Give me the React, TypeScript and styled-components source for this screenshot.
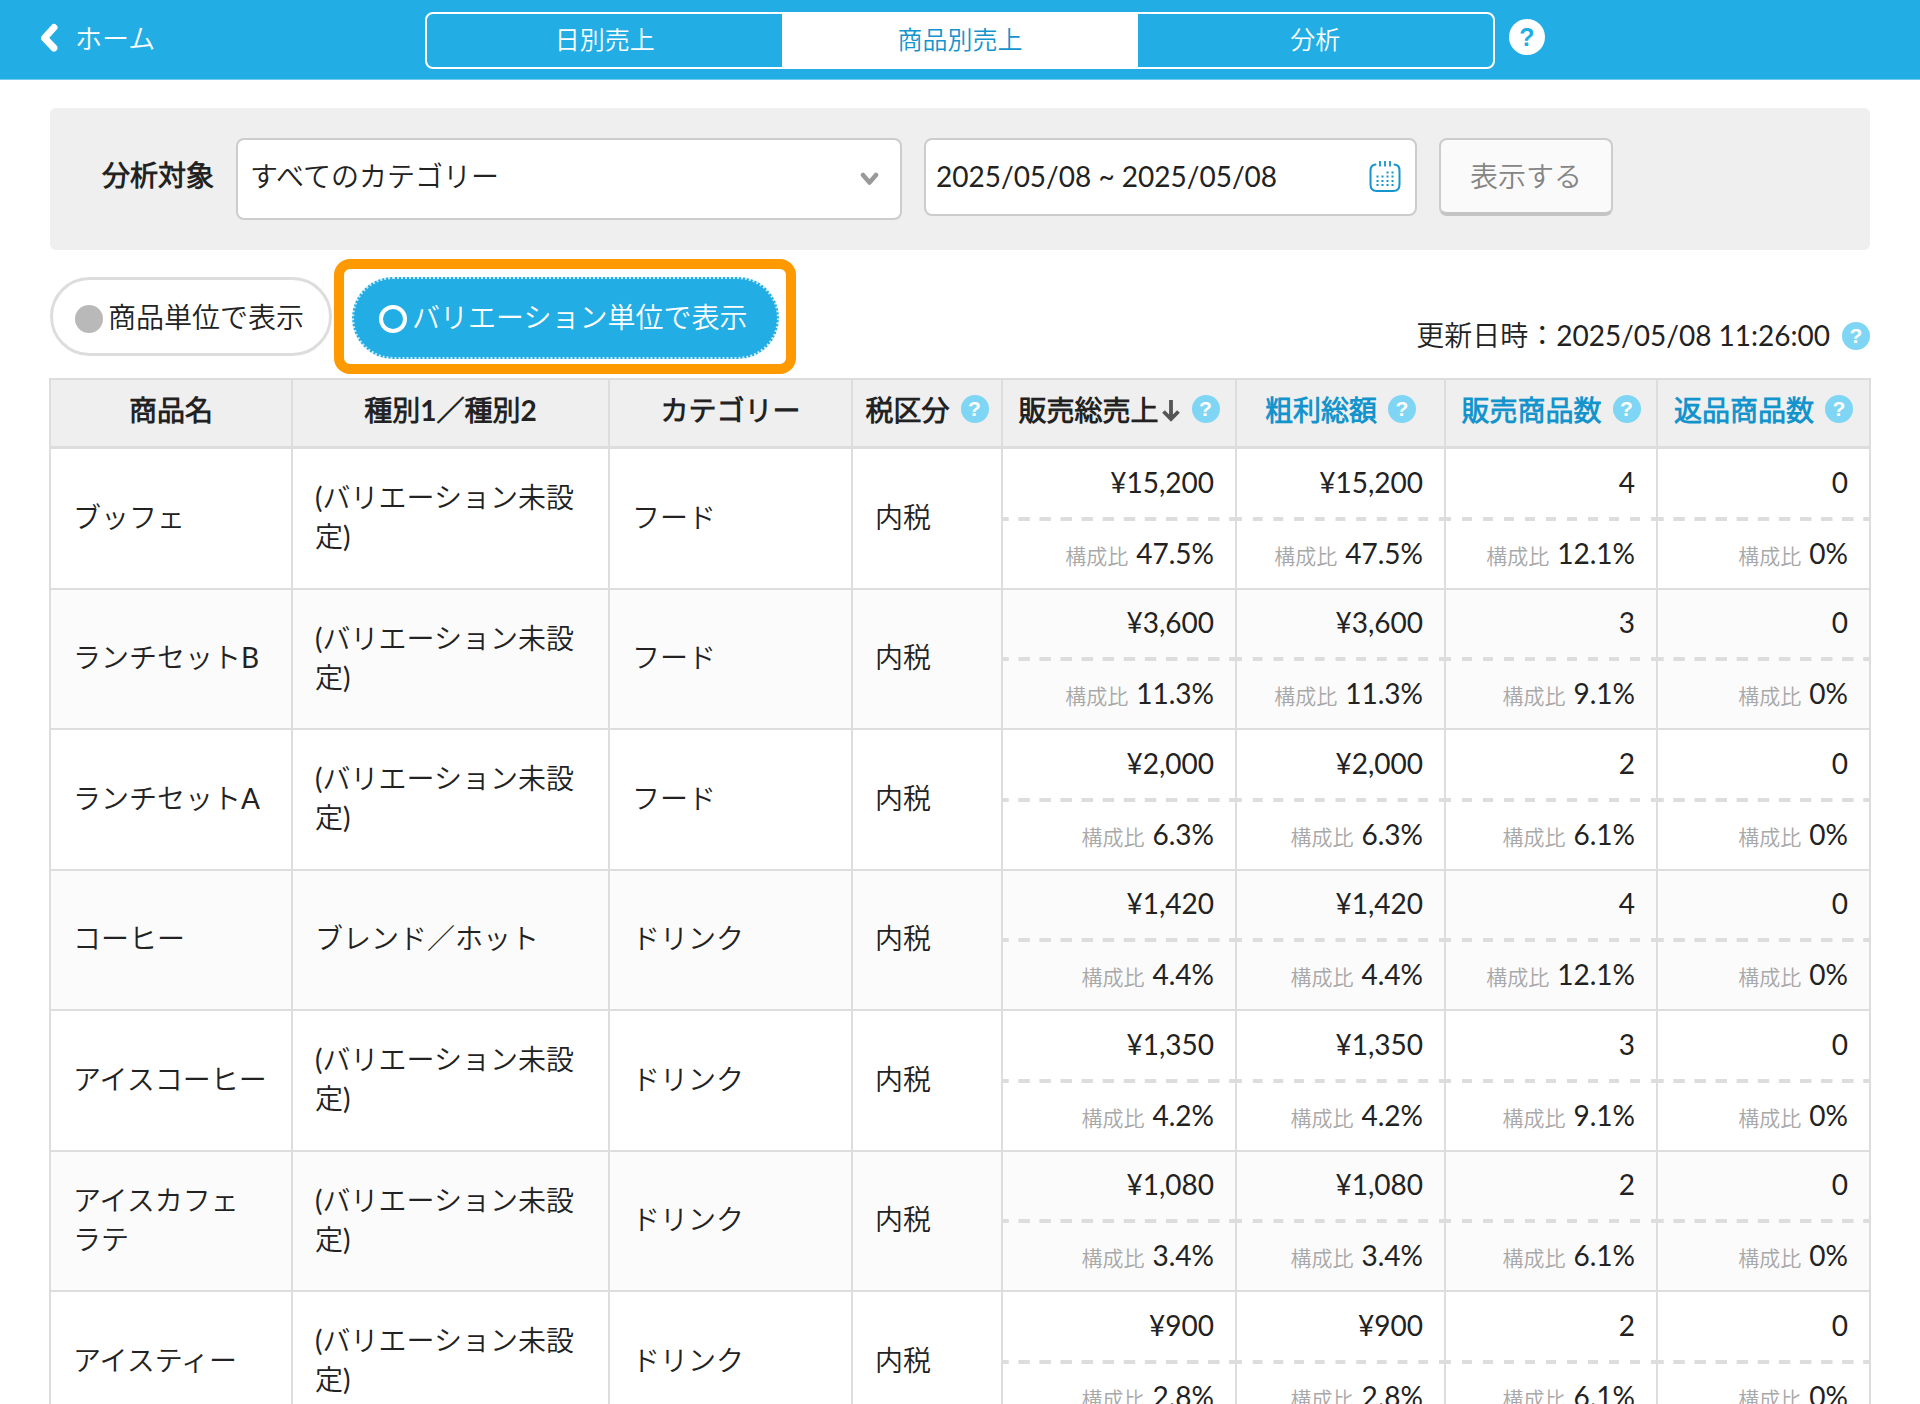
import React from "react";
import styled, { createGlobalStyle, css } from "styled-components";

const color = {
  brand: "#22ade5",
  link: "#1394cc",
  help: "#7fd5f4",
  text: "#222222",
  muted: "#a8a8a8",
  line: "#dddddd",
  field: "#cccccc",
  panel: "#efefef",
  stripe: "#fbfbfb",
  highlight: "#ff9900",
};

const GlobalStyle = createGlobalStyle`
  *, *::before, *::after { box-sizing: border-box; }
  body { margin: 0; background: #fff; }
  body, button, input, select {
    font-family: Lato, "Noto Sans CJK JP DemiLight", "Noto Sans CJK JP Light", "Noto Sans CJK JP", sans-serif;
    font-size: 28px;
    line-height: 39px;
    color: ${color.text};
  }
`;

const Shell = styled.div`
  display: flex;
  flex-direction: column;
  height: 100vh;
`;

const Header = styled.header`
  flex: none;
  display: grid;
  grid-template-columns: 1fr minmax(0, 1070px) 1fr;
  height: 80px;
  padding: 12px 40px 0;
  background: ${color.brand};
  border-bottom: 1px solid #74cdf0;
`;

const HomeLink = styled.a`
  justify-self: start;
  display: flex;
  align-items: center;
  gap: 15px;
  height: 52px;
  color: #fff;
  font-size: 27px;
  text-decoration: none;
`;

const Tabs = styled.nav`
  display: grid;
  grid-template-columns: repeat(3, 1fr);
  height: 57px;
  border: 2px solid #fff;
  border-radius: 8px;
  overflow: hidden;
`;

const Tab = styled.button<{ $active?: boolean }>`
  padding: 0 0 2px;
  border: 0;
  font-size: 25px;
  background: ${(p) => (p.$active ? "#fff" : "transparent")};
  color: ${(p) => (p.$active ? color.link : "#fff")};
`;

const HelpButton = styled.button<{ $large?: boolean }>`
  flex: none;
  display: grid;
  place-items: center;
  width: ${(p) => (p.$large ? 36 : 28)}px;
  height: ${(p) => (p.$large ? 36 : 28)}px;
  padding: 0;
  border: 0;
  border-radius: 50%;
  font-family: "Liberation Sans", sans-serif;
  font-size: ${(p) => (p.$large ? 25 : 21)}px;
  font-weight: 700;
  line-height: 1;
  background: ${(p) => (p.$large ? "#fff" : color.help)};
  color: ${(p) => (p.$large ? color.brand : "#fff")};
`;

const HeaderSide = styled.div`
  padding: 7px 14px;
`;

const Main = styled.main`
  flex: 1;
  min-height: 0;
  padding: 28px 50px 0;
  overflow-y: auto;
  scrollbar-width: none;
`;

const FilterPanel = styled.form`
  display: flex;
  align-items: flex-start;
  padding: 30px 52px;
  background: ${color.panel};
  border-radius: 6px;
`;

const FilterLabel = styled.label`
  flex: none;
  margin-right: 22px;
  line-height: 74px;
  font-weight: 700;
`;

const Field = styled.div<{ $basis: number }>`
  display: grid;
  flex: 0 1 ${(p) => p.$basis}px;
  min-width: 0;
  align-items: center;

  > * {
    grid-area: 1 / 1;
  }
  > svg {
    justify-self: end;
    pointer-events: none;
  }
`;

const fieldBox = css`
  width: 100%;
  min-width: 0;
  background: #fff;
  border: 2px solid ${color.field};
  border-radius: 8px;
`;

const CategorySelect = styled.select`
  ${fieldBox}
  height: 82px;
  padding: 0 60px 6px 12px;
  appearance: none;
`;

const DateInput = styled.input`
  ${fieldBox}
  height: 78px;
  padding: 0 60px 2px 10px;
`;

const FieldGap = styled.div`
  flex: none;
  width: 22px;
`;

const SubmitButton = styled.button`
  flex: none;
  width: 174px;
  height: 78px;
  padding: 0;
  background: #fafafa;
  border: 2px solid ${color.field};
  border-bottom: 4px solid #c4c4c4;
  border-radius: 8px;
  color: #858585;
`;

const Toolbar = styled.div`
  display: flex;
  justify-content: space-between;
  align-items: flex-end;
  padding: 9px 0 4px;
`;

const UnitSwitch = styled.div`
  display: flex;
  align-items: center;
  gap: 2px;
`;

const Highlight = styled.div`
  padding: 8px 7px 5px 8px;
  border: 10px solid ${color.highlight};
  border-radius: 16px;
`;

const Pill = styled.label<{ $active?: boolean }>`
  display: flex;
  align-items: center;
  gap: 5px;
  white-space: nowrap;
  border-radius: 41px;
  ${(p) =>
    p.$active
      ? css`
          width: 427px;
          height: 82px;
          padding: 0 25px 1px;
          color: #fff;
          background: ${color.brand};
          border: 2px dotted #c9ecfa;
        `
      : css`
          width: 282px;
          height: 79px;
          padding: 1px 22px 0;
          background: #fff;
          border: 3px solid ${color.line};
        `}
`;

const Radio = styled.input`
  flex: none;
  width: 28px;
  height: 28px;
  margin: 3px 0 0;
  appearance: none;
  border-radius: 50%;
  background: #b9b9b9;

  &:checked {
    background: transparent;
    border: 4px solid #fff;
  }
`;

const Updated = styled.div`
  display: flex;
  align-items: center;
  gap: 12px;
  padding-bottom: 19px;
`;

const Table = styled.table`
  width: calc(100% + 2px);
  margin: 0 -1px;
  table-layout: fixed;
  border-collapse: separate;
  border-spacing: 0;
  border: solid ${color.line};
  border-width: 2px 0 0 2px;
`;

const HeadCell = styled.th`
  height: 69px;
  padding: 0 0 6px;
  background: ${color.panel};
  border: solid ${color.line};
  border-width: 0 2px 3px 0;
  font-weight: 700;
  white-space: nowrap;
`;

const HeadContent = styled.div`
  display: flex;
  justify-content: center;
  align-items: center;
  gap: 11px;

  > ${HelpButton} {
    margin-bottom: 3px;
  }
`;

const SortButton = styled.button<{ $current?: boolean }>`
  display: flex;
  align-items: center;
  gap: 2px;
  padding: 0;
  border: 0;
  background: none;
  font-weight: 700;
  color: ${(p) => (p.$current ? color.text : color.link)};
`;

const Row = styled.tr`
  height: 141px;

  &:nth-child(even) {
    height: 140px;
    background: ${color.stripe};
  }
`;

const Cell = styled.td`
  padding: 0 20px 3px 22px;
  border: solid ${color.line};
  border-width: 0 2px 2px 0;
  white-space: pre-line;
`;

const MetricCell = styled(Cell)`
  padding: 0;
  text-align: right;
`;

const Metric = styled.div`
  height: 67px;
  padding: 0 21px;
  line-height: 65px;
  white-space: nowrap;
`;

const DashedRule = styled.div`
  height: 4px;
  background: linear-gradient(
      90deg,
      ${color.line} 26%,
      transparent 26% 74%,
      ${color.line} 74%
    )
    0 0 / 21px 4px round;
`;

const RatioLabel = styled.span`
  margin-right: 8px;
  font-size: 21px;
  color: ${color.muted};
`;

const BackIcon = () => (
  <svg width="20" height="32" viewBox="0 0 20 32" fill="none" aria-hidden="true">
    <path d="M14 5.500 4.500 16 14 26" stroke="#fff" strokeWidth="7" strokeLinecap="round" strokeLinejoin="round" />
  </svg>
);

const ChevronIcon = () => (
  <svg width="42" height="16" viewBox="0 0 42 16" fill="none" aria-hidden="true">
    <path d="m3 4 6.500 7.500L16 4" stroke="#999" strokeWidth="4.500" strokeLinecap="round" strokeLinejoin="round" />
  </svg>
);

const CalendarIcon = () => (
  <svg width="48" height="32" viewBox="0 0 48 32" fill="none" stroke={color.link} aria-hidden="true">
    <path d="M6.500 3.500C2.500 4 1.500 6 1.500 9.500v14c0 4.500 2 6.500 6.500 6.500h16c4.500 0 6.500-2 6.500-6.500v-14c0-3.500-1-5.500-5-6" strokeWidth="2" strokeLinecap="round" />
    <path d="M11 0v5.500M16 0v5.500M21 0v5.500" strokeWidth="1.800" />
    <path d="M17.500 11.500h8M7.500 15.500h18M7.500 20h18M7.500 24h18" strokeWidth="2" strokeDasharray="2 3" />
  </svg>
);

const SortArrow = () => (
  <svg width="20" height="24" viewBox="0 0 20 24" fill="none" stroke="#555" strokeWidth="3.800" aria-hidden="true">
    <path d="M10 2v18M2.500 13.500l7.500 7.500 7.500-7.500" />
  </svg>
);

const Help = ({ large, about }: { large?: boolean; about: string }) => (
  <HelpButton type="button" $large={large} aria-label={about + "のヘルプ"}>
    ?
  </HelpButton>
);

type Column = { title: string; width: number; help?: boolean; sort?: "current" | "available" };

const columns: Column[] = [
  { title: "商品名", width: 242 },
  { title: "種別1／種別2", width: 317 },
  { title: "カテゴリー", width: 243 },
  { title: "税区分", width: 150, help: true },
  { title: "販売総売上", width: 234, help: true, sort: "current" },
  { title: "粗利総額", width: 209, help: true, sort: "available" },
  { title: "販売商品数", width: 212, help: true, sort: "available" },
  { title: "返品商品数", width: 213, help: true, sort: "available" },
];

const unset = "(バリエーション未設定)";

type Product = {
  name: string;
  variation: string;
  category: string;
  sales: string;
  salesRatio: string;
  count: string;
  countRatio: string;
};

const products: Product[] = [
  { name: "ブッフェ", variation: unset, category: "フード", sales: "¥15,200", salesRatio: "47.5%", count: "4", countRatio: "12.1%" },
  { name: "ランチセットB", variation: unset, category: "フード", sales: "¥3,600", salesRatio: "11.3%", count: "3", countRatio: "9.1%" },
  { name: "ランチセットA", variation: unset, category: "フード", sales: "¥2,000", salesRatio: "6.3%", count: "2", countRatio: "6.1%" },
  { name: "コーヒー", variation: "ブレンド／ホット", category: "ドリンク", sales: "¥1,420", salesRatio: "4.4%", count: "4", countRatio: "12.1%" },
  { name: "アイスコーヒー", variation: unset, category: "ドリンク", sales: "¥1,350", salesRatio: "4.2%", count: "3", countRatio: "9.1%" },
  { name: "アイスカフェ\nラテ", variation: unset, category: "ドリンク", sales: "¥1,080", salesRatio: "3.4%", count: "2", countRatio: "6.1%" },
  { name: "アイスティー", variation: unset, category: "ドリンク", sales: "¥900", salesRatio: "2.8%", count: "2", countRatio: "6.1%" },
];

const MetricPair = ({ value, ratio }: { value: string; ratio: string }) => (
  <MetricCell>
    <Metric>{value}</Metric>
    <DashedRule />
    <Metric>
      <RatioLabel>構成比</RatioLabel>
      {ratio}
    </Metric>
  </MetricCell>
);

export default function App() {
  return (
    <Shell>
      <GlobalStyle />
      <Header>
        <HomeLink href="#home">
          <BackIcon />
          ホーム
        </HomeLink>
        <Tabs>
          <Tab type="button">日別売上</Tab>
          <Tab type="button" $active>
            商品別売上
          </Tab>
          <Tab type="button">分析</Tab>
        </Tabs>
        <HeaderSide>
          <Help large about="商品別売上" />
        </HeaderSide>
      </Header>

      <Main>
        <FilterPanel onSubmit={(e) => e.preventDefault()}>
          <FilterLabel htmlFor="category">分析対象</FilterLabel>
          <Field $basis={666}>
            <CategorySelect id="category">
              <option>すべてのカテゴリー</option>
            </CategorySelect>
            <ChevronIcon />
          </Field>
          <FieldGap />
          <Field $basis={493}>
            <DateInput type="text" aria-label="期間" defaultValue="2025/05/08 ~ 2025/05/08" />
            <CalendarIcon />
          </Field>
          <FieldGap />
          <SubmitButton type="submit">表示する</SubmitButton>
        </FilterPanel>

        <Toolbar>
          <UnitSwitch>
            <Pill>
              <Radio type="radio" name="unit" />
              商品単位で表示
            </Pill>
            <Highlight>
              <Pill $active>
                <Radio type="radio" name="unit" defaultChecked />
                バリエーション単位で表示
              </Pill>
            </Highlight>
          </UnitSwitch>
          <Updated>
            更新日時：2025/05/08 11:26:00
            <Help about="更新日時" />
          </Updated>
        </Toolbar>

        <Table>
          <colgroup>
            {columns.map((c) => (
              <col key={c.title} width={c.width} />
            ))}
          </colgroup>
          <thead>
            <tr>
              {columns.map((c) => (
                <HeadCell key={c.title} scope="col">
                  <HeadContent>
                    {c.sort ? (
                      <SortButton type="button" $current={c.sort === "current"}>
                        {c.title}
                        {c.sort === "current" && <SortArrow />}
                      </SortButton>
                    ) : (
                      c.title
                    )}
                    {c.help && <Help about={c.title} />}
                  </HeadContent>
                </HeadCell>
              ))}
            </tr>
          </thead>
          <tbody>
            {products.map((p) => (
              <Row key={p.name}>
                <Cell>{p.name}</Cell>
                <Cell>{p.variation}</Cell>
                <Cell>{p.category}</Cell>
                <Cell>内税</Cell>
                <MetricPair value={p.sales} ratio={p.salesRatio} />
                <MetricPair value={p.sales} ratio={p.salesRatio} />
                <MetricPair value={p.count} ratio={p.countRatio} />
                <MetricPair value="0" ratio="0%" />
              </Row>
            ))}
          </tbody>
        </Table>
      </Main>
    </Shell>
  );
}
